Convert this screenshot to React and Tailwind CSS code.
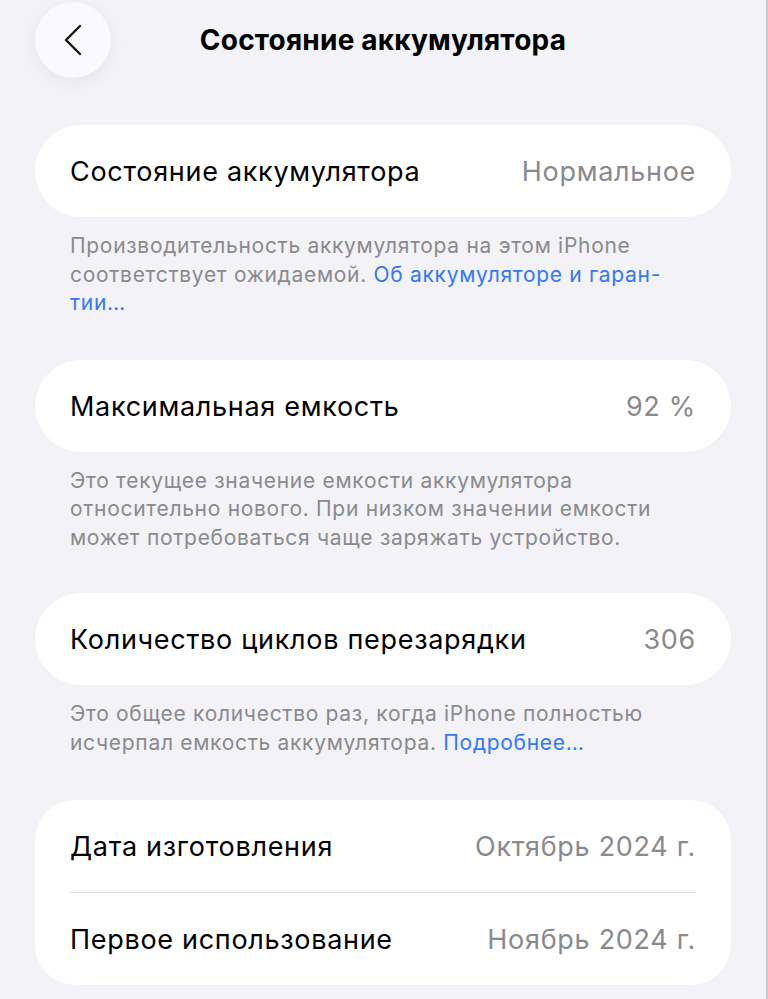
import React from "react";

const font = { fontFamily: "Inter, Roboto, 'Noto Sans', sans-serif" };

function Row({ label, value }) {
  return (
    <div className="flex h-[92px] items-center justify-between px-[35px] pt-[3px]">
      <span className="text-[27px] tracking-[0.7px] text-black">{label}</span>
      <span className="text-[27px] tracking-[0.7px] text-[#8a8a8e]">{value}</span>
    </div>
  );
}

function Note({ children }) {
  return (
    <p className="whitespace-nowrap px-[35px] pt-[15px] text-[21px] leading-[28.5px] tracking-[0.7px] text-[#8a8a8e]">
      {children}
    </p>
  );
}

export default function App() {
  return (
    <div
      className="h-[999px] w-[768px] overflow-hidden border-r-2 border-[#c9c9cf] bg-[#f2f2f7]"
      style={font}
    >
      <header className="relative flex h-[80px] items-center justify-center">
        <button className="absolute left-[35px] top-[2px] flex h-[76px] w-[76px] items-center justify-center rounded-full bg-[#fafafc] shadow-[0_4px_16px_rgba(0,0,0,0.06)]">
          <svg width="30" height="34" viewBox="0 0 30 34" fill="none">
            <path
              d="M22 3 L8 17 L22 31"
              stroke="#111"
              strokeWidth="2.4"
              strokeLinecap="round"
              strokeLinejoin="round"
            />
          </svg>
        </button>
        <h1 className="text-[28px] font-bold tracking-[0.2px] text-black">Состояние аккумулятора</h1>
      </header>

      <main className="px-[35px] pt-[45px]">
        <section>
          <div className="rounded-full bg-white">
            <Row label="Состояние аккумулятора" value="Нормальное" />
          </div>
          <Note>
            Производительность аккумулятора на этом iPhone
            <br />
            соответствует ожидаемой.{" "}
            <span className="text-[#3478f6]">
              Об аккумуляторе и гаран-
              <br />
              тии…
            </span>
          </Note>
        </section>

        <section className="pt-[42px]">
          <div className="rounded-full bg-white">
            <Row label="Максимальная емкость" value="92 %" />
          </div>
          <Note>
            Это текущее значение емкости аккумулятора
            <br />
            относительно нового. При низком значении емкости
            <br />
            может потребоваться чаще заряжать устройство.
          </Note>
        </section>

        <section className="pt-[41px]">
          <div className="rounded-full bg-white">
            <Row label="Количество циклов перезарядки" value="306" />
          </div>
          <Note>
            Это общее количество раз, когда iPhone полностью
            <br />
            исчерпал емкость аккумулятора.{" "}
            <span className="text-[#3478f6]">Подробнее…</span>
          </Note>
        </section>

        <section className="pt-[43px]">
          <div className="rounded-[40px] bg-white">
            <Row label="Дата изготовления" value="Октябрь 2024 г." />
            <div className="mx-[35px] h-px bg-[#e3e3e8]" />
            <Row label="Первое использование" value="Ноябрь 2024 г." />
          </div>
        </section>
      </main>
    </div>
  );
}
